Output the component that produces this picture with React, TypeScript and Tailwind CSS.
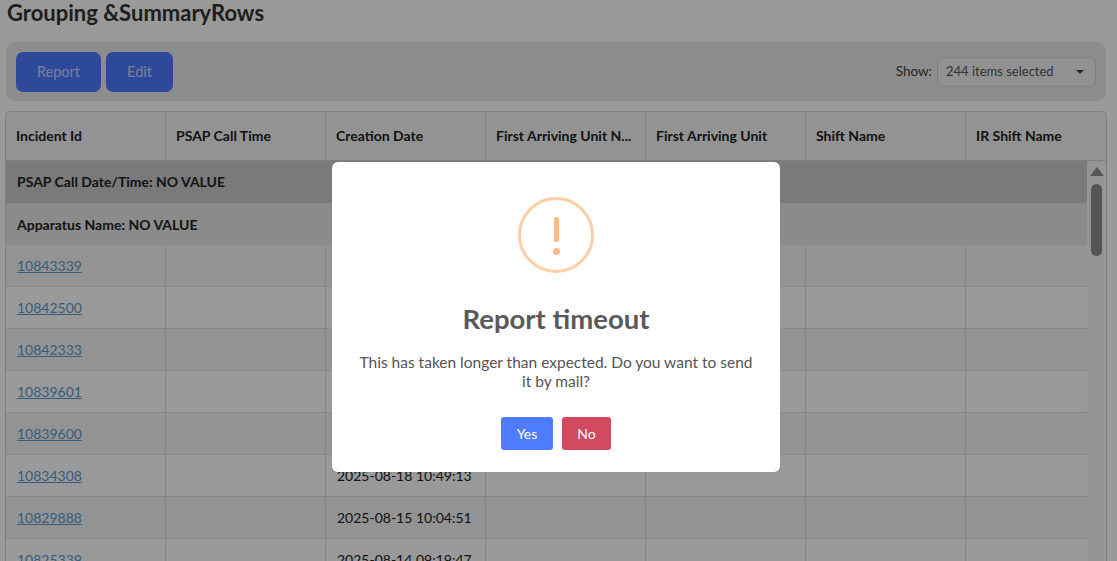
import React from "react";

const columns = ["Incident Id", "PSAP Call Time", "Creation Date", "First Arriving Unit N...", "First Arriving Unit", "Shift Name", "IR Shift Name"];

const rows = [
  { id: "10843339", date: "" },
  { id: "10842500", date: "" },
  { id: "10842333", date: "" },
  { id: "10839601", date: "" },
  { id: "10839600", date: "" },
  { id: "10834308", date: "2025-08-18 10:49:13" },
  { id: "10829888", date: "2025-08-15 10:04:51" },
  { id: "10825339", date: "2025-08-14 09:19:47" },
];

export default function App() {
  return (
    <div className="relative h-[561px] w-[1117px] overflow-hidden bg-white font-['Lato',sans-serif] text-[14px] text-[#222]">
      {/* Page */}
      <div className="flex flex-col h-full pl-[5px] pr-[10px]">
        <h1 className="font-bold text-[22px] leading-[25px] text-[#333] pl-[2px]">Grouping &amp;SummaryRows</h1>

        <div className="mt-[17px] ml-[1px] mr-[1px] h-[59px] shrink-0 rounded-[10px] bg-[#ebebeb] flex items-center pl-[10px] pr-[10px]">
          <button className="h-[40px] w-[85px] rounded-[7px] bg-[#4e7bff] text-white/70 text-[14.5px]">Report</button>
          <button className="ml-[5px] h-[40px] w-[67px] rounded-[7px] bg-[#4e7bff] text-white/70 text-[14.5px]">Edit</button>
          <span className="ml-auto mr-[5px] text-[13.5px] text-[#444]">Show:</span>
          <div className="h-[30px] w-[159px] rounded-[7px] border border-[#d4d4d4] bg-[#f2f2f2] flex items-center pl-[8px] pr-[11px] text-[#555] text-[13px]">
            244 items selected
            <span className="ml-auto w-0 h-0 border-x-[4px] border-x-transparent border-t-[4px] border-t-[#444]" />
          </div>
        </div>

        <div className="mt-[10px] flex-1 min-h-0 rounded-t-[6px] border-x border-t border-[#d4d4d4] overflow-hidden flex flex-col">
          <div className="h-[49px] shrink-0 flex border-b border-[#d4d4d4] bg-[#f5f5f5] font-bold">
            {columns.map((c, i) => (
              <div key={c} className={`w-[160px] shrink-0 h-full flex items-center px-[10px] pb-[2px] ${i === columns.length - 1 ? "" : "border-r border-[#dedede]"}`}>{c}</div>
            ))}
          </div>

          <div className="flex flex-1 min-h-0">
            <div className="w-[1081px] shrink-0 overflow-hidden">
              <div className="h-[42px] bg-[#cbcbcb] flex items-center px-[11px] pb-[2px] font-bold">PSAP Call Date/Time: NO VALUE</div>
              <div className="h-[42px] bg-[#e8e8e8] flex items-center px-[11px] font-bold">Apparatus Name: NO VALUE</div>
              {rows.map((r, i) => (
                <div key={r.id} className={`h-[42px] flex border-b border-[#e2e3ea] ${i % 2 === 0 ? "bg-[#f5f5f5]" : "bg-white"}`}>
                  {[r.id, "", r.date, "", "", "", ""].map((v, j) => (
                    <div key={j} className={`w-[160px] shrink-0 h-full flex items-center px-[11px] ${j < 6 ? "border-r border-[#dedede]" : ""}`}>
                      {j === 0 ? <a className="underline text-[#5b9bd1]">{v}</a> : v}
                    </div>
                  ))}
                </div>
              ))}
            </div>
            <div className="flex-1 flex flex-col items-center pt-[6px] bg-[#f8f8f8]">
              <span className="w-0 h-0 border-x-[7px] border-x-transparent border-b-[9px] border-b-[#8e8e8e]" />
              <div className="mt-[8px] w-[11px] h-[72px] rounded-full bg-[#8e8e8e]" />
            </div>
          </div>
        </div>
      </div>

      {/* Modal backdrop */}
      <div className="absolute inset-0 bg-black/40">
        <div className="ml-[332px] mt-[162px] h-[310px] w-[448px] rounded-[6px] bg-white flex flex-col items-center pt-[35px]">
          <div className="h-[76px] w-[76px] rounded-full border-[3px] border-[#facea8] flex flex-col items-center">
            <span className="mt-[17px] h-[25px] w-[5px] rounded-[2px] bg-[#f8bb86]" />
            <span className="mt-[6px] h-[7px] w-[7px] rounded-full bg-[#f8bb86]" />
          </div>
          <h2 className="mt-[29px] font-bold text-[27.5px] leading-[34px] text-[#595959]">Report timeout</h2>
          <p className="mt-[17px] w-[400px] text-center text-[15.5px] leading-[19px] text-[#545454]">This has taken longer than expected. Do you want to send it by mail?</p>
          <div className="mt-[26px] flex gap-[9px]">
            <button className="h-[33px] w-[52px] rounded-[3px] bg-[#4f7cff] text-white text-[14px]">Yes</button>
            <button className="h-[33px] w-[49px] rounded-[3px] bg-[#d04a60] text-white text-[14px]">No</button>
          </div>
        </div>
      </div>
    </div>
  );
}
